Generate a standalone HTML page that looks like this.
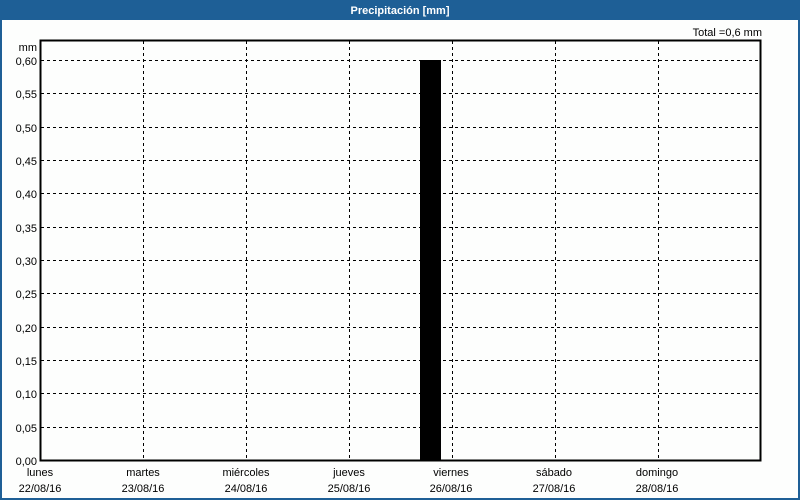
<!DOCTYPE html><html><head><style>
body{margin:0;width:800px;height:500px;overflow:hidden;background:#1e5f96;font-family:"Liberation Sans","DejaVu Sans",sans-serif}
</style></head><body>
<svg width="800" height="500" xmlns="http://www.w3.org/2000/svg" style="position:absolute;left:0;top:0">
<rect x="0" y="0" width="800" height="500" fill="#1e5f96"/>
<rect x="2" y="20" width="796" height="478" fill="#fdfefd"/>
<text x="400" y="14" fill="#fff" font-size="11" font-weight="bold" text-anchor="middle">Precipitación [mm]</text>
<text x="762" y="36" font-size="11" text-anchor="end" fill="#000">Total =0,6 mm</text>
<text x="37" y="51" font-size="11" text-anchor="end" fill="#000">mm</text>
<g stroke="#000" stroke-width="1" stroke-dasharray="3,3" fill="none">
<path d="M143.5 41V460M246.5 41V460M349.5 41V460M452.5 41V460M555.5 41V460M658.5 41V460"/>
<path d="M41 60.5H760M41 93.5H760M41 127.5H760M41 160.5H760M41 193.5H760M41 227.5H760M41 260.5H760M41 293.5H760M41 327.5H760M41 360.5H760M41 393.5H760M41 427.5H760"/>
</g>
<rect x="420" y="60" width="21" height="401" fill="#000"/>
<path d="M40.5 40.5H760.5V460.5H40.5Z" stroke="#000" stroke-width="2" fill="none"/>
<g font-size="11" text-anchor="end" fill="#000">
<text x="37" y="65">0,60</text><text x="37" y="98">0,55</text><text x="37" y="132">0,50</text><text x="37" y="165">0,45</text><text x="37" y="198">0,40</text><text x="37" y="232">0,35</text><text x="37" y="265">0,30</text><text x="37" y="298">0,25</text><text x="37" y="332">0,20</text><text x="37" y="365">0,15</text><text x="37" y="398">0,10</text><text x="37" y="432">0,05</text><text x="37" y="465">0,00</text>
</g>
<g font-size="11" text-anchor="middle" fill="#000">
<text x="40" y="476">lunes</text><text x="40" y="492">22/08/16</text>
<text x="143" y="476">martes</text><text x="143" y="492">23/08/16</text>
<text x="246" y="476">miércoles</text><text x="246" y="492">24/08/16</text>
<text x="349" y="476">jueves</text><text x="349" y="492">25/08/16</text>
<text x="451" y="476">viernes</text><text x="451" y="492">26/08/16</text>
<text x="554" y="476">sábado</text><text x="554" y="492">27/08/16</text>
<text x="657" y="476">domingo</text><text x="657" y="492">28/08/16</text>
</g>
</svg>
</body></html>
